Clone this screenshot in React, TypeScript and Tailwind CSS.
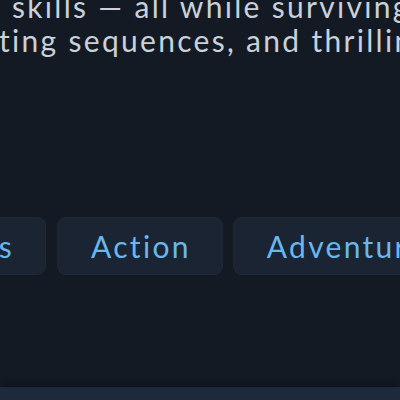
import React from "react";

export default function App() {
  return (
    <div
      className="w-[400px] h-[400px] overflow-hidden bg-[#141a24] flex flex-col [font-variant-ligatures:none]"
      style={{ fontFamily: "Lato, 'Noto Sans', sans-serif" }}
    >
      <div className="mt-[-11px] text-[30px] leading-[34px] tracking-[2.3px] text-[#c9d1da] whitespace-nowrap">
        <div className="pl-[12px]">skills — all while surviving</div>
        <div className="-ml-[1px]">ting sequences, and thrilling</div>
      </div>
      <div className="mt-[160px] flex gap-[10px] whitespace-nowrap text-[30px] leading-[36px] tracking-[2.3px] text-[#68b8ee]">
        <div className="w-[46px] shrink-0 flex justify-end">
          <div className="shrink-0 h-[58px] flex items-center pl-[33px] pr-[31px] rounded-[9px] bg-[#1b2433] border border-[#1f2938]">
            Graphics
          </div>
        </div>
        <div className="shrink-0 ml-[1px] h-[58px] flex items-center pl-[33px] pr-[31px] rounded-[9px] bg-[#1b2433] border border-[#1f2938]">
          Action
        </div>
        <div className="shrink-0 h-[58px] flex items-center pl-[33px] pr-[31px] rounded-[9px] bg-[#1b2433] border border-[#1f2938]">
          Adventure
        </div>
      </div>
      <div className="mt-auto h-[13px] bg-[#1d2a3c] shadow-[0_-4px_6px_rgba(0,0,0,0.25)]" />
    </div>
  );
}
